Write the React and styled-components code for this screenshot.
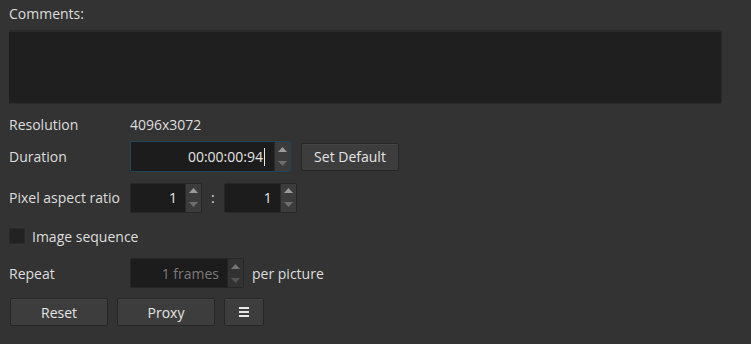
import React from 'react'
import styled, { createGlobalStyle } from 'styled-components'

const Global = createGlobalStyle`
  html, body {
    margin: 0;
    background: #333333;
  }
  body {
    font-family: "Open Sans", "Noto Sans", sans-serif;
    font-size: 14px;
    color: #dedede;
  }
`

const Panel = styled.div`
  width: 751px;
  height: 344px;
  box-sizing: border-box;
  padding: 3px 0 0 9px;
  background: #333333;
`

const Caption = styled.div`
  height: 23px;
  line-height: 22px;
`

const Comments = styled.div`
  width: 713px;
  height: 74px;
  margin-top: 4px;
  box-sizing: border-box;
  background: #1f1f1f;
  border-top: 2px solid #2a2a2a;
  border-right: 1px solid #2b2b2b;
  border-bottom: 1px solid #2b2b2b;
`

const Form = styled.div`
  display: grid;
  grid-template-columns: 121px auto;
  align-items: center;
  margin-top: ${p => p.$mt || 0}px;
`

const Row = styled.div`
  display: contents;
`

const Label = styled.div`
  height: ${p => p.$h}px;
  display: flex;
  align-items: center;
  gap: 7px;
  white-space: nowrap;
  grid-column: ${p => (p.$wide ? '1 / -1' : 'auto')};
`

const Cell = styled.div`
  display: flex;
  align-items: center;
  gap: ${p => p.$gap || 8}px;
  height: ${p => p.$h}px;
`

const Field = styled.div`
  display: flex;
  width: ${p => p.$w}px;
  height: ${p => p.$h}px;
  box-sizing: border-box;
  background: #1c1c1c;
  border: 1px solid ${p => (p.$focus ? '#1f4659' : '#262626')};
  border-radius: 2px;
`

const Value = styled.div`
  flex: 1;
  display: flex;
  align-items: center;
  justify-content: flex-end;
  padding-right: ${p => p.$pr || 8}px;
  color: ${p => (p.$dim ? '#7a7a7a' : '#e4e4e4')};
`

const Caret = styled.span`
  display: inline-block;
  width: 1px;
  height: 18px;
  background: #e8e8e8;
  margin-left: 1px;
`

const Spin = styled.div`
  width: 15px;
  display: flex;
  flex-direction: column;
  background: #3c3c3c;
  border-left: 1px solid #2a2a2a;
  opacity: ${p => (p.$dim ? 0.7 : 1)};
`

const Arrow = styled.div`
  flex: 1;
  display: flex;
  align-items: center;
  justify-content: center;
`

const Button = styled.button`
  width: ${p => p.$w}px;
  height: 28px;
  box-sizing: border-box;
  background: #3d3d3d;
  border: 1px solid #262626;
  border-radius: 2px;
  color: #e4e4e4;
  font-family: inherit;
  font-size: 14px;
  padding: 0;
  display: flex;
  align-items: center;
  justify-content: center;
  box-shadow: inset 0 1px 0 #454545;
`

const Check = styled.div`
  flex-shrink: 0;
  width: 16px;
  height: 16px;
  background: #222222;
  border: 1px solid #2a2a2a;
  box-sizing: border-box;
  border-radius: 1px;
`

const Buttons = styled.div`
  display: flex;
  gap: 9px;
  margin-top: 6px;
  padding-left: 1px;
`

const Burger = () => (
  <svg width="12" height="12" viewBox="0 0 12 12">
    <rect x="1" y="1" width="10" height="2" fill="#e8e8e8" />
    <rect x="1" y="5" width="10" height="2" fill="#e8e8e8" />
    <rect x="1" y="9" width="10" height="2" fill="#e8e8e8" />
  </svg>
)

const Up = () => (
  <svg width="9" height="5" viewBox="0 0 9 5"><path d="M0 5 L4.5 0 L9 5 Z" fill="#9a9a9a" /></svg>
)
const Down = () => (
  <svg width="9" height="5" viewBox="0 0 9 5"><path d="M0 0 L4.5 5 L9 0 Z" fill="#6e6e6e" /></svg>
)

const Spinner = ({ dim }) => (
  <Spin $dim={dim}>
    <Arrow><Up /></Arrow>
    <Arrow><Down /></Arrow>
  </Spin>
)

export default function App() {
  return (
    <Panel>
      <Global />
      <Caption>Comments:</Caption>
      <Comments />
      <Form $mt={8}>
        <Row>
          <Label $h={24}>Resolution</Label>
          <Cell $h={24}>4096x3072</Cell>
        </Row>
        <Row>
          <Label $h={41}>Duration</Label>
          <Cell $h={41} $gap={10}>
            <Field $w={161} $h={31} $focus>
              <Value $pr={9}>00:00:00:94<Caret /></Value>
              <Spinner />
            </Field>
            <Button $w={98}>Set Default</Button>
          </Cell>
        </Row>
        <Row>
          <Label $h={41}>Pixel aspect ratio</Label>
          <Cell $h={41} $gap={9}>
            <Field $w={72} $h={30}>
              <Value>1</Value>
              <Spinner />
            </Field>
            <span>:</span>
            <Field $w={73} $h={30}>
              <Value>1</Value>
              <Spinner />
            </Field>
          </Cell>
        </Row>
        <Row>
          <Label $h={36} $wide>
            <Check />
            <span>Image sequence</span>
          </Label>
        </Row>
        <Row>
          <Label $h={38}>Repeat</Label>
          <Cell $h={38} $gap={8}>
            <Field $w={114} $h={30}>
              <Value $dim>1 frames</Value>
              <Spinner dim />
            </Field>
            <span>per picture</span>
          </Cell>
        </Row>
      </Form>
      <Buttons>
        <Button $w={98}>Reset</Button>
        <Button $w={98}>Proxy</Button>
        <Button $w={40}><Burger /></Button>
      </Buttons>
    </Panel>
  )
}
